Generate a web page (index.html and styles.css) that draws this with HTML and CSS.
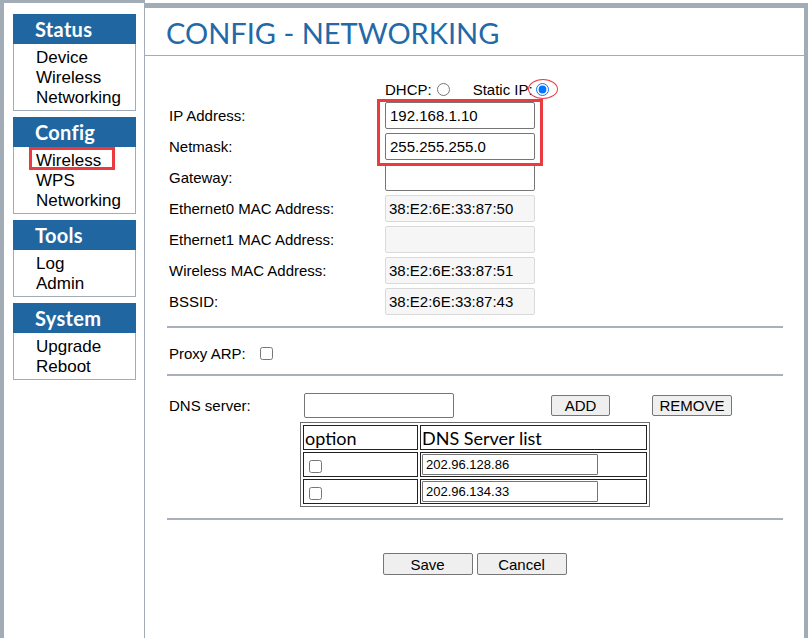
FILE: index.html
```html
<!DOCTYPE html>
<html lang="en">
<head>
<meta charset="utf-8">
<title>CONFIG - NETWORKING</title>
<link rel="stylesheet" href="styles.css">
</head>
<body>
<div class="frame">
  <aside class="nav">
    <section class="box">
      <div class="box-head">Status</div>
      <div class="box-body">
        <div class="item">Device</div>
        <div class="item">Wireless</div>
        <div class="item">Networking</div>
      </div>
    </section>
    <section class="box">
      <div class="box-head">Config</div>
      <div class="box-body marked">
        <div class="item">Wireless</div>
        <div class="item">WPS</div>
        <div class="item">Networking</div>
        <span class="mark mark-nav"></span>
      </div>
    </section>
    <section class="box">
      <div class="box-head">Tools</div>
      <div class="box-body">
        <div class="item">Log</div>
        <div class="item">Admin</div>
      </div>
    </section>
    <section class="box">
      <div class="box-head">System</div>
      <div class="box-body">
        <div class="item">Upgrade</div>
        <div class="item">Reboot</div>
      </div>
    </section>
  </aside>

  <main class="content">
    <h1 class="title">CONFIG - NETWORKING</h1>
    <form class="form">
      <div class="row mode">
        <span></span>
        <div class="modes">
          <span>DHCP:</span><input type="radio" name="mode">
          <span class="static-label">Static IP:</span><input type="radio" name="mode" class="static-radio" checked>
        </div>
      </div>
      <div class="row"><label>IP Address:</label><input class="field" type="text" value="192.168.1.10"></div>
      <div class="row"><label>Netmask:</label><input class="field" type="text" value="255.255.255.0"></div>
      <div class="row"><label>Gateway:</label><input class="field" type="text" value=""></div>
      <div class="row"><label>Ethernet0 MAC Address:</label><input class="field ro" type="text" value="38:E2:6E:33:87:50" readonly></div>
      <div class="row"><label>Ethernet1 MAC Address:</label><input class="field ro" type="text" value="" readonly></div>
      <div class="row"><label>Wireless MAC Address:</label><input class="field ro" type="text" value="38:E2:6E:33:87:51" readonly></div>
      <div class="row"><label>BSSID:</label><input class="field ro" type="text" value="38:E2:6E:33:87:43" readonly></div>

      <div class="sep sep-1"></div>

      <div class="proxy"><label>Proxy ARP:</label><input type="checkbox" class="proxy-check"></div>

      <div class="sep sep-2"></div>

      <div class="dns-row">
        <label class="dns-label">DNS server:</label>
        <input class="dns-input" type="text" value="">
        <button type="button" class="btn btn-add">ADD</button>
        <button type="button" class="btn btn-remove">REMOVE</button>
      </div>

      <table class="dns-table">
        <tr>
          <td class="c-opt head">option</td>
          <td class="c-list head">DNS Server list</td>
        </tr>
        <tr>
          <td class="c-opt"><input type="checkbox"></td>
          <td class="c-list"><input class="cell-input" type="text" value="202.96.128.86"></td>
        </tr>
        <tr>
          <td class="c-opt"><input type="checkbox"></td>
          <td class="c-list"><input class="cell-input" type="text" value="202.96.134.33"></td>
        </tr>
      </table>

      <div class="sep sep-3"></div>

      <div class="actions">
        <button type="button" class="btn btn-big">Save</button>
        <button type="button" class="btn btn-big">Cancel</button>
      </div>

      <span class="mark mark-ip"></span>
      <span class="mark-oval"></span>
    </form>
  </main>
</div>
</body>
</html>
```

FILE: styles.css
```css
* { box-sizing: border-box; }

html, body {
  margin: 0;
  padding: 0;
  background: #ffffff;
}

body {
  font-family: "Liberation Sans", Arial, sans-serif;
  font-size: 15px;
  color: #000;
}

.frame {
  display: flex;
  height: 638px;
}

/* ---------- left navigation ---------- */
.nav {
  width: 145px;
  flex: none;
  border-left: 4px solid #a2acb7;
  border-right: 1px solid #a2acb7;
  border-top: 3px solid #a2acb7;
  padding: 11px 0 0 9px;
}

.box {
  width: 123px;
  margin-bottom: 6px;
}

.box-head {
  height: 30px;
  line-height: 31px;
  background: #2067a2;
  color: #fff;
  font-family: Lato, "Open Sans", sans-serif;
  font-weight: 700;
  font-size: 20px;
  padding-left: 22px;
  letter-spacing: 0.3px;
}

.box-body {
  position: relative;
  border: 1px solid #a2acb7;
  border-top: none;
  padding: 4px 0 2px 22px;
}

.item {
  font-size: 17px;
  line-height: 20px;
  color: #000;
}

/* ---------- annotation marks ---------- */
.mark {
  position: absolute;
  border: 3px solid #ec3b40;
  pointer-events: none;
}

.mark-nav {
  left: 15px;
  top: 0;
  width: 86px;
  height: 23px;
}

.mark-ip {
  left: 232px;
  top: 43px;
  width: 166px;
  height: 67px;
}

.mark-oval {
  position: absolute;
  left: 383px;
  top: 23px;
  width: 30px;
  height: 20px;
  border: 1px solid #ec3b40;
  border-radius: 50%;
}

/* ---------- content ---------- */
.content {
  flex: 1;
  margin-top: 3px;
  border-top: 5px solid #a2acb7;
  border-right: 4px solid #a2acb7;
}

.title {
  margin: 0;
  height: 48px;
  line-height: 49px;
  padding-left: 21px;
  border-bottom: 1px solid #a2acb7;
  font-family: Lato, "Open Sans", sans-serif;
  font-weight: 400;
  font-size: 29px;
  color: #2369a8;
}

.form {
  position: relative;
  padding: 24px 21px 0 22px;
  margin: 0;
}

.row {
  display: grid;
  grid-template-columns: 218px 150px;
  align-items: center;
  height: 27px;
  margin-top: 4px;
}

.row.mode {
  height: 18px;
  margin-top: 0;
}

.row label {
  padding-left: 2px;
}

.modes {
  display: flex;
  align-items: center;
  white-space: nowrap;
}

.modes input {
  margin: 0 3px 0 5px;
  width: 13px;
  height: 13px;
}

.static-label {
  margin-left: 20px;
}

.modes .static-radio {
  margin-left: 3px;
}

.field {
  width: 150px;
  height: 27px;
  border: 1px solid #767676;
  border-radius: 2px;
  padding: 0 4px;
  font-family: "Liberation Sans", Arial, sans-serif;
  font-size: 15px;
  color: #000;
  background: #fff;
}

.field.ro {
  background: #f6f6f6;
  border-color: #dadada;
  padding-left: 3px;
}

.sep {
  height: 2px;
  background: #a8b1bb;
}

.sep-1 { margin-top: 11px; }
.sep-2 { margin-top: 11px; }
.sep-3 { margin-top: 11px; }

.proxy {
  display: flex;
  align-items: center;
  height: 20px;
  margin-top: 15px;
  padding-left: 2px;
}

.proxy-check {
  margin: 0 0 0 14px;
  width: 13px;
  height: 13px;
}

.dns-row {
  display: flex;
  align-items: center;
  margin-top: 17px;
  height: 25px;
}

.dns-label {
  width: 137px;
  padding-left: 2px;
  flex: none;
}

.dns-input {
  width: 150px;
  height: 25px;
  border: 1px solid #767676;
  border-radius: 2px;
  font-family: "Liberation Sans", Arial, sans-serif;
  font-size: 15px;
}

.btn {
  font-family: "Liberation Sans", Arial, sans-serif;
  font-size: 15px;
  color: #000;
  background: #efefef;
  border: 1px solid #767676;
  border-radius: 2px;
  padding: 0;
  height: 21px;
}

.btn-add {
  width: 59px;
  margin-left: 97px;
}

.btn-remove {
  width: 80px;
  margin-left: 42px;
}

.dns-table {
  margin: 4px 0 0 133px;
  border: 1px solid #6e6e6e;
  border-collapse: separate;
  border-spacing: 2px;
  width: 350px;
}

.dns-table td {
  border: 1px solid #222;
  height: 25px;
  padding: 0 1px;
  vertical-align: middle;
}

.dns-table .c-opt { width: 115px; }
.dns-table .c-list { width: 227px; }

.dns-table td.head {
  font-family: Lato, "Open Sans", sans-serif;
  font-size: 18px;
  color: #000;
  line-height: 22px;
}

.dns-table input[type="checkbox"] {
  margin: 0 0 0 4px;
  width: 13px;
  height: 13px;
  vertical-align: middle;
}

.cell-input {
  display: block;
  width: 176px;
  height: 21px;
  border: 1px solid #767676;
  border-radius: 1px;
  padding: 0 3px;
  font-family: "Liberation Sans", Arial, sans-serif;
  font-size: 13px;
  color: #000;
}

.actions {
  margin-top: 33px;
  margin-left: -22px;
  margin-right: -21px;
  text-align: center;
  font-size: 0;
}

.btn-big {
  width: 90px;
  height: 22px;
  margin: 0 2px;
  font-size: 15px;
}
```
